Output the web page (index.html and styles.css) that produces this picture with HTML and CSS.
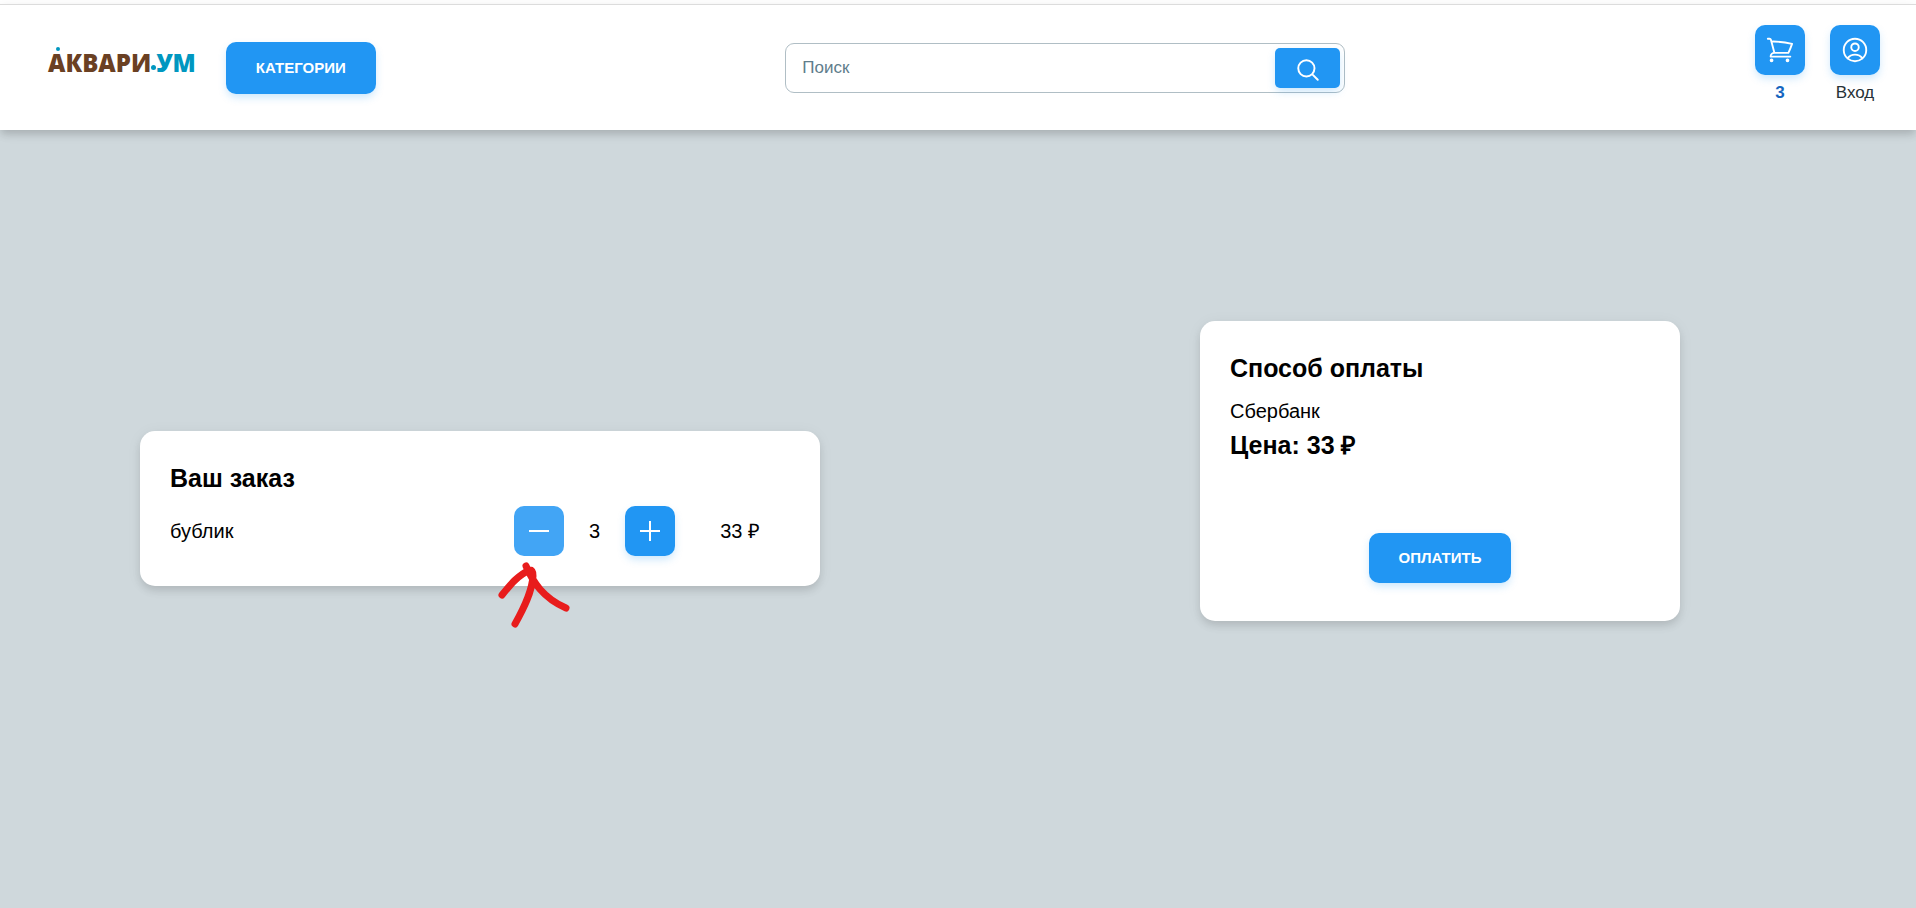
FILE: index.html
```html
<!DOCTYPE html>
<html lang="ru">
<head>
<meta charset="utf-8">
<meta name="viewport" content="width=device-width, initial-scale=1">
<title>Аквариум — оформление заказа</title>
<link rel="stylesheet" href="styles.css">
</head>
<body>
<header class="header">
  <div class="header-left">
    <a class="logo" href="#"><span class="logo-main">АКВАРИ</span><span class="logo-dot"></span><span class="logo-accent">УМ</span></a>
    <button class="btn btn-categories" type="button">КАТЕГОРИИ</button>
  </div>
  <form class="search" role="search">
    <input class="search-input" type="search" placeholder="Поиск" aria-label="Поиск">
    <button class="search-btn" type="submit" aria-label="Найти">
      <svg class="icon-search" viewBox="0 0 24 24" fill="none" stroke="currentColor" stroke-width="1.8" stroke-linecap="round"><path d="m21 21-5.197-5.197m0 0A7.5 7.5 0 1 0 5.196 5.196a7.5 7.5 0 0 0 10.607 10.607Z"/></svg>
    </button>
  </form>
  <nav class="header-right">
    <div class="action">
      <button class="icon-btn" type="button" aria-label="Корзина">
        <svg class="icon" viewBox="0 0 24 24" fill="none" stroke="currentColor" stroke-width="1.5" stroke-linecap="round" stroke-linejoin="round"><path d="M2.25 3h1.386c.51 0 .955.343 1.087.835l.383 1.437M7.5 14.25a3 3 0 0 0-3 3h15.75m-12.75-3h11.218c1.121-2.3 2.1-4.684 2.924-7.138a60.114 60.114 0 0 0-16.536-1.84M7.5 14.25 5.106 5.272M6 20.25a.75.75 0 1 1-1.5 0 .75.75 0 0 1 1.5 0Zm12.75 0a.75.75 0 1 1-1.5 0 .75.75 0 0 1 1.5 0Z"/></svg>
      </button>
      <span class="action-count">3</span>
    </div>
    <div class="action">
      <button class="icon-btn" type="button" aria-label="Вход">
        <svg class="icon" viewBox="0 0 24 24" fill="none" stroke="currentColor" stroke-width="1.5" stroke-linecap="round" stroke-linejoin="round"><path d="M17.982 18.725A7.488 7.488 0 0 0 12 15.75a7.488 7.488 0 0 0-5.982 2.975m11.963 0a9 9 0 1 0-11.963 0m11.963 0A8.966 8.966 0 0 1 12 21a8.966 8.966 0 0 1-5.982-2.275M15 9.75a3 3 0 1 1-6 0 3 3 0 0 1 6 0Z"/></svg>
      </button>
      <span class="action-label">Вход</span>
    </div>
  </nav>
</header>
<main class="main">
  <section class="card order">
    <h1 class="card-title">Ваш заказ</h1>
    <div class="order-row">
      <span class="order-name">бублик</span>
      <div class="stepper">
        <button class="icon-btn icon-btn-hover" type="button" aria-label="Уменьшить"><svg class="icon-step" viewBox="0 0 20 20" stroke="currentColor" stroke-width="2"><path d="M0 10h20"/></svg></button>
        <span>3</span>
        <button class="icon-btn" type="button" aria-label="Увеличить"><svg class="icon-step" viewBox="0 0 20 20" stroke="currentColor" stroke-width="2"><path d="M0 10h20M10 0v20"/></svg></button>
      </div>
      <span class="order-price">33 ₽</span>
    </div>
    <svg class="arrow" viewBox="0 0 72 66" fill="none" stroke="currentColor" stroke-width="7" stroke-linecap="round" stroke-linejoin="round" aria-hidden="true"><path d="M4 33C12 23 20 13 32 8Q35 8 35 14C34 30 26 46 17 62M28 4C35 20 45 36 68 46"/></svg>
  </section>
  <section class="card payment">
    <h2 class="card-title">Способ оплаты</h2>
    <p class="payment-method">Сбербанк</p>
    <p class="payment-total">Цена: 33 ₽</p>
    <button class="btn btn-pay" type="button">ОПЛАТИТЬ</button>
  </section>
</main>
</body>
</html>
```

FILE: styles.css
```css
* {
  box-sizing: border-box;
}

body {
  margin: 0;
  min-height: 100vh;
  display: flex;
  flex-direction: column;
  padding-top: 4px;
  background: linear-gradient(#fff 4px, #cfd8dc 4px);
  color: #000;
  font: 20px/30px "Liberation Sans", Arial, sans-serif;
}

button {
  font-family: inherit;
  border: 0;
  cursor: pointer;
}

.header {
  display: flex;
  justify-content: space-between;
  align-items: center;
  gap: 24px;
  padding: 20px 36px 20px 48px;
  background: #fff;
  border-top: 1px solid #dcdcdc;
  box-shadow: 0 5px 8px -1px rgba(0, 0, 0, 0.16), 0 2px 16px rgba(0, 0, 0, 0.05);
}

.header-left {
  display: flex;
  align-items: center;
  gap: 30px;
}

.logo {
  position: relative;
  display: flex;
  align-items: baseline;
  margin-bottom: 10px;
  font: 800 24px/28px "Open Sans", "Liberation Sans", sans-serif;
  text-decoration: none;
}

.logo::before {
  content: "";
  position: absolute;
  left: 8px;
  top: -2px;
  width: 4px;
  height: 4px;
  border-radius: 50%;
  background: #0097c0;
}

.logo-main {
  color: #6a4023;
}

.logo-dot {
  align-self: flex-end;
  width: 5px;
  height: 5px;
  border-radius: 50%;
  margin-bottom: 7px;
  background: #0097c0;
}

.logo-accent {
  color: #0097c0;
}

.btn {
  padding: 0 30px;
  border-radius: 10px;
  background: #2196f3;
  color: #fff;
  font-size: 15px;
  font-weight: 700;
  box-shadow: 0 4px 8px -1px rgba(33, 150, 243, 0.25);
}

.btn-categories {
  height: 52px;
}

.search {
  display: flex;
  width: 560px;
  height: 50px;
  padding: 4px;
  border: 1px solid #b0bec5;
  border-radius: 9px;
}

.search-input {
  flex: 1;
  min-width: 0;
  padding: 0 12px;
  border: 0;
  outline: 0;
  background: transparent;
  color: #455a64;
  font: 17px/24px "Liberation Sans", Arial, sans-serif;
}

.search-input::placeholder {
  color: #607d8b;
  opacity: 1;
}

.search-btn {
  display: grid;
  place-items: center;
  width: 65px;
  padding: 4px 0 0;
  border-radius: 5px;
  background: #2196f3;
  color: #fff;
  box-shadow: 0 4px 8px -1px rgba(33, 150, 243, 0.25);
}

.icon-search {
  width: 26px;
  height: 26px;
}

.header-right {
  display: flex;
  gap: 25px;
  padding-bottom: 4px;
}

.action {
  display: flex;
  flex-direction: column;
  align-items: center;
  gap: 5px;
  width: 50px;
  font-size: 17px;
  line-height: 26px;
}

.action-count {
  color: #1565c0;
  font-weight: 700;
}

.action-label {
  color: #263238;
}

.icon-btn {
  display: grid;
  place-items: center;
  width: 50px;
  height: 50px;
  padding: 0;
  border-radius: 10px;
  background: #2196f3;
  color: #fff;
  box-shadow: 0 4px 8px -1px rgba(33, 150, 243, 0.25);
}

.icon-btn-hover {
  background: #42a5f5;
  box-shadow: none;
}

.icon {
  width: 30px;
  height: 30px;
}

.icon-step {
  width: 20px;
  height: 20px;
}

.main {
  flex: 1;
  display: flex;
  align-items: center;
  justify-content: space-between;
  gap: 40px;
  padding: 20px 236px 42px 140px;
}

.card {
  position: relative;
  padding: 30px;
  border-radius: 15px;
  background: #fff;
  box-shadow: 0 5px 8px -1px rgba(0, 0, 0, 0.12), 0 2px 16px rgba(0, 0, 0, 0.05);
}

.card-title {
  margin: 0 0 10px;
  font-size: 25px;
  line-height: 35px;
}

.order {
  width: 680px;
}

.order-row,
.stepper {
  display: flex;
  align-items: center;
}

.order-name {
  flex: 1;
}

.stepper {
  gap: 25px;
}

.order-price {
  margin-left: 45px;
  padding-right: 30px;
}

.arrow {
  position: absolute;
  left: 358px;
  top: 131px;
  width: 72px;
  height: 66px;
  color: #e81c1c;
}

.payment {
  display: flex;
  flex-direction: column;
  width: 480px;
  margin-bottom: 75px;
  padding-bottom: 38px;
}

.payment-method {
  margin: 0;
}

.payment-total {
  margin: 2px 0 70px;
  font-size: 25px;
  font-weight: 700;
  line-height: 35px;
}

.btn-pay {
  align-self: center;
  height: 50px;
}
```
